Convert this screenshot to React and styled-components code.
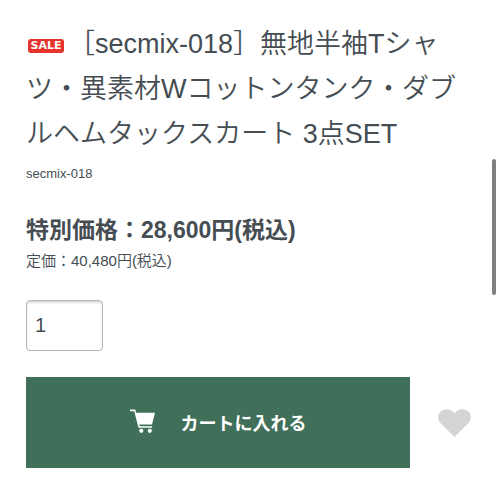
import React, { useState } from "react";
import styled, { createGlobalStyle } from "styled-components";

const GlobalStyle = createGlobalStyle`
  * { box-sizing: border-box; }
  body {
    margin: 0;
    background: #fff;
    color: #454d53;
    font-family: "Liberation Sans", "Noto Sans CJK JP", sans-serif;
  }
`;

const Page = styled.main`
  padding: 22px 26px 32px;
`;

const Title = styled.h1`
  margin: 0;
  padding-right: 16px;
  font-size: 27px;
  font-weight: 350;
  line-height: 45px;
`;

const SaleBadge = styled.span`
  display: inline-block;
  width: 36px;
  height: 14px;
  margin: 0 4px 0 2px;
  border-radius: 3px;
  background: #e5342b;
  color: #fff;
  font: bold 11px/14px "DejaVu Sans", sans-serif;
  text-align: center;
  vertical-align: middle;
`;

const ProductCode = styled.p`
  margin: 7px 0 0;
  font-size: 13px;
  line-height: 20px;
`;

const Price = styled.p`
  margin: 28px 0 0;
  font-size: 23px;
  font-weight: 700;
  line-height: 37px;
`;

const ListPrice = styled.p`
  margin: 0;
  font-size: 15px;
  font-weight: 350;
  line-height: 24px;
`;

const Quantity = styled.input`
  display: block;
  width: 77px;
  height: 51px;
  margin: 27px 0 26px;
  padding: 0 8px;
  border: 1px solid #b5b5b5;
  border-radius: 4px;
  background: #fff;
  box-shadow: inset 0 2px 2px #ddd;
  color: #454d53;
  font: 20px "Liberation Sans", sans-serif;
`;

const Actions = styled.div`
  display: flex;
  align-items: center;
  gap: 28px;
`;

const CartButton = styled.button`
  display: flex;
  flex: 1;
  align-items: center;
  justify-content: center;
  gap: 25px;
  height: 91px;
  padding: 0 0 2px;
  border: 0;
  background: #40705a;
  color: #fff;
  font: bold 18px "Noto Sans CJK JP", sans-serif;
  cursor: pointer;
`;

const FavoriteButton = styled.button`
  display: flex;
  padding: 0;
  border: 0;
  margin-right: 3px;
  background: none;
  color: #d4d4d4;
  cursor: pointer;
`;

const ScrollThumb = styled.div`
  position: fixed;
  top: 159px;
  right: 4px;
  width: 4px;
  height: 136px;
  border-radius: 2px;
  background: #7f7f7f;
`;

const CartIcon = () => (
  <svg width="26" height="25" viewBox="0 0 26 25" fill="currentColor" aria-hidden="true">
    <path d="M0 .5h5.2l1 3.2H25l-3 11.8H9.2l.6 1.7h12.4v1.5H8.5L4.2 2.3H0z" />
    <circle cx="11.3" cy="21.8" r="2.1" />
    <circle cx="19.8" cy="21.8" r="2.1" />
  </svg>
);

const HeartIcon = () => (
  <svg width="33" height="28" viewBox="0 0 33 28" fill="currentColor" aria-hidden="true">
    <path d="M16.5 28 3 14.6C-.6 11-.6 6 2.3 2.8 5.8-.9 12.5-1 16.5 4.4 20.5-1 27.2-.9 30.7 2.8 33.6 6 33.6 11 30 14.6z" />
  </svg>
);

export default function App() {
  const [quantity, setQuantity] = useState("1");
  return (
    <>
      <GlobalStyle />
      <Page lang="ja">
        <Title>
          <SaleBadge>SALE</SaleBadge>
          ［secmix-018］無地半袖Tシャツ・異素材Wコットンタンク・ダブルヘムタックスカート 3点SET
        </Title>
        <ProductCode>secmix-018</ProductCode>
        <Price>特別価格：28,600円(税込)</Price>
        <ListPrice>定価：40,480円(税込)</ListPrice>
        <Quantity
          aria-label="数量"
          inputMode="numeric"
          value={quantity}
          onChange={(event) => setQuantity(event.target.value)}
        />
        <Actions>
          <CartButton type="button">
            <CartIcon />
            カートに入れる
          </CartButton>
          <FavoriteButton type="button" aria-label="お気に入り">
            <HeartIcon />
          </FavoriteButton>
        </Actions>
      </Page>
      <ScrollThumb />
    </>
  );
}
